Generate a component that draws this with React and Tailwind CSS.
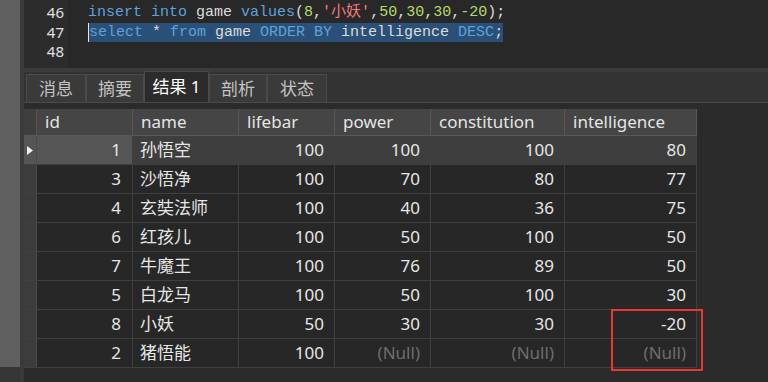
import React from "react";

const rows = [
  { id: 1, name: "孙悟空", lifebar: "100", power: "100", con: "100", int: "80" },
  { id: 3, name: "沙悟净", lifebar: "100", power: "70", con: "80", int: "77" },
  { id: 4, name: "玄奘法师", lifebar: "100", power: "40", con: "36", int: "75" },
  { id: 6, name: "红孩儿", lifebar: "100", power: "50", con: "100", int: "50" },
  { id: 7, name: "牛魔王", lifebar: "100", power: "76", con: "89", int: "50" },
  { id: 5, name: "白龙马", lifebar: "100", power: "50", con: "100", int: "30" },
  { id: 8, name: "小妖", lifebar: "50", power: "30", con: "30", int: "-20" },
  { id: 2, name: "猪悟能", lifebar: "100", power: null, con: null, int: null },
];

const headers = ["id", "name", "lifebar", "power", "constitution", "intelligence"];
const widths = ["w-[96px]", "w-[106px]", "w-[96px]", "w-[96px]", "w-[134px]", "w-[132px]"];

const tabs = [
  { label: "消息", w: "w-[60px]" },
  { label: "摘要", w: "w-[58px]" },
  { label: "结果 1", w: "w-[65px]", active: true },
  { label: "剖析", w: "w-[58px]" },
  { label: "状态", w: "w-[60px]" },
];

const kw = "text-[#5ea2dc]";
const num = "text-[#b5dc6a]";
const str = "text-[#f47a7a]";
const plain = "text-[#dcdcdc]";

function NumCell({ value, w }) {
  return (
    <div className={`${w} h-full shrink-0 flex items-center justify-end pr-[10px] border-r border-[#404040]`}>
      {value === null ? <span className="text-[#6e6e6e]">(Null)</span> : <span>{value}</span>}
    </div>
  );
}

export default function App() {
  return (
    <div
      className="w-[768px] h-[382px] flex overflow-hidden bg-[#2b2b2b] text-[#e6e6e6]"
      style={{ fontFamily: '"Noto Sans", "Noto Sans CJK SC", sans-serif' }}
    >
      {/* left strip */}
      <div className="w-[20px] flex flex-col shrink-0">
        <div className="h-[367px] bg-[#5f5f5f]" />
        <div className="flex-1 bg-[#363636]" />
      </div>
      <div className="w-[4px] shrink-0 bg-[#3a3a3a]" />

      <div className="flex-1 flex flex-col min-w-0">
        {/* editor */}
        <div className="h-[68px] flex overflow-hidden bg-[#282828]">
          <div className="w-[44px] shrink-0 bg-[#2c2c2c] pt-[3px]">
            <div className="text-[15px] leading-[19.5px] text-right pr-[4px] text-[#e0e0e0]">
              <div>46</div>
              <div>47</div>
              <div>48</div>
            </div>
          </div>
          <div
            className="flex-1 pt-[3px] pl-[20px] text-[15px] leading-[19.5px] whitespace-pre"
            style={{ fontFamily: '"Liberation Mono", "Noto Sans CJK SC", monospace' }}
          >
            <div>
              <span className={kw}>insert into</span>
              <span className={plain}> game </span>
              <span className={kw}>values</span>
              <span className={plain}>(</span>
              <span className={num}>8</span>
              <span className={plain}>,</span>
              <span className={str}>'小妖'</span>
              <span className={plain}>,</span>
              <span className={num}>50</span>
              <span className={plain}>,</span>
              <span className={num}>30</span>
              <span className={plain}>,</span>
              <span className={num}>30</span>
              <span className={plain}>,</span>
              <span className={num}>-20</span>
              <span className={plain}>);</span>
            </div>
            <div className="flex">
              <span className="bg-[#2b5078] border-l border-[#e8e8e8]">
                <span className={kw}>select</span>
                <span className={plain}> * </span>
                <span className={kw}>from</span>
                <span className={plain}> game </span>
                <span className={kw}>ORDER BY</span>
                <span className={plain}> intelligence </span>
                <span className={kw}>DESC</span>
                <span className={plain}>;</span>
              </span>
            </div>
          </div>
        </div>

        {/* tab bar */}
        <div className="h-[4px] bg-[#3b3b3b]" />
        <div className="h-[30px] bg-[#333333] flex items-end pl-[2px]">
          {tabs.map((t) =>
            t.active ? (
              <div
                key={t.label}
                className={`${t.w} h-[31px] -mt-[1px] bg-[#2b2b2b] border-x border-t border-[#4a4a4a] flex items-center justify-center text-[17px] text-white`}
              >
                {t.label}
              </div>
            ) : (
              <div
                key={t.label}
                className={`${t.w} h-[28px] bg-[#3a3a3a] border-x border-t border-[#4a4a4a] flex items-center justify-center text-[17px] text-[#c4c4c4]`}
              >
                {t.label}
              </div>
            )
          )}
        </div>
        <div className="h-[1px] bg-[#4a4a4a]" />
        <div className="h-[6px] bg-[#2b2b2b]" />

        {/* table */}
        <div className="relative w-[673px] text-[17px]">
          <div className="flex h-[27px] bg-[#454545] border-b border-[#575757]">
            <div className="w-[13px] shrink-0 bg-[#3e3e3e] border-r border-[#555]" />
            {headers.map((h, i) => (
              <div
                key={h}
                className={`${widths[i]} shrink-0 flex items-center pl-[8px] border-r border-[#575757] text-[#e4e4e4]`}
              >
                {h}
              </div>
            ))}
          </div>
          {rows.map((r, idx) => {
            const sel = idx === 0;
            return (
              <div
                key={r.id}
                className={`flex h-[29px] border-b border-[#404040] ${sel ? "bg-[#3e3e3e]" : "bg-[#272727]"}`}
              >
                <div
                  className={`w-[13px] shrink-0 flex items-center justify-center border-r border-[#4a4a4a] ${sel ? "bg-[#555555]" : "bg-[#3c3c3c]"}`}
                >
                  {sel && (
                    <svg width="8" height="11" viewBox="0 0 8 11">
                      <path d="M1 1 L7 5.5 L1 10 Z" fill="#f0f0f0" />
                    </svg>
                  )}
                </div>
                <div
                  className={`w-[96px] shrink-0 flex items-center justify-end pr-[11px] border-r border-[#404040] ${sel ? "bg-[#555555]" : ""}`}
                >
                  {r.id}
                </div>
                <div className="w-[106px] shrink-0 flex items-center pl-[7px] border-r border-[#404040]">
                  {r.name}
                </div>
                <NumCell value={r.lifebar} w="w-[96px]" />
                <NumCell value={r.power} w="w-[96px]" />
                <NumCell value={r.con} w="w-[134px]" />
                <NumCell value={r.int} w="w-[132px]" />
              </div>
            );
          })}
          <div className="absolute left-[587px] top-[200px] w-[92px] h-[62px] border-2 border-[#e53935]" />
        </div>
      </div>
    </div>
  );
}
